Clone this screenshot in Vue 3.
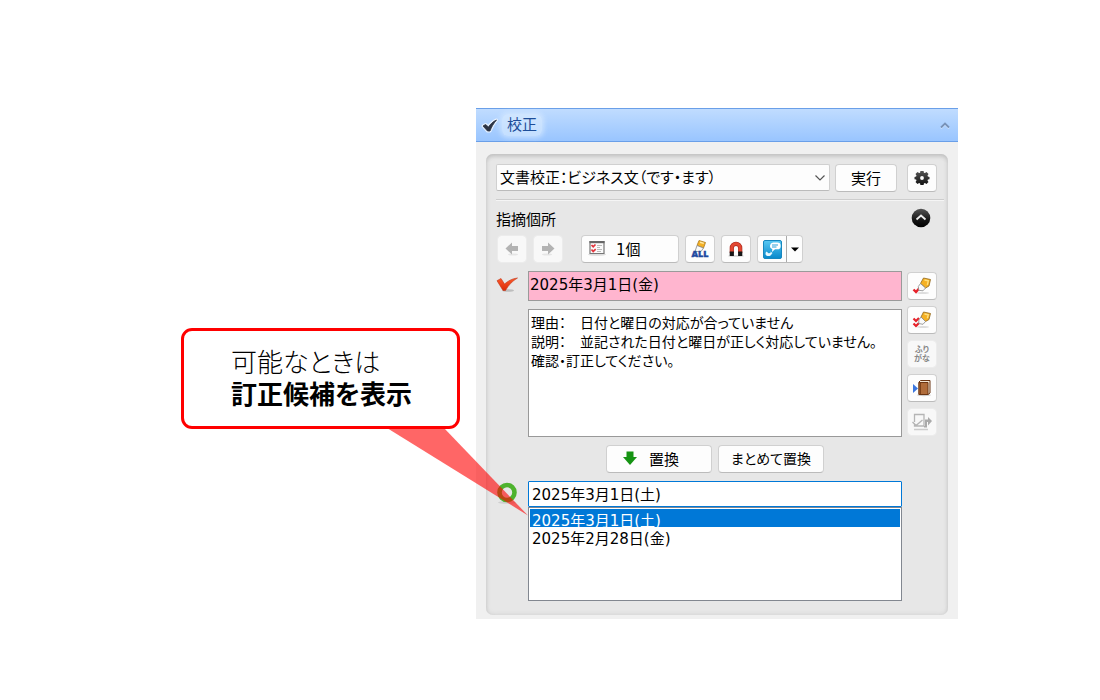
<script setup>
import { ref } from 'vue'

const rule = ref('business')
const finding = ref('2025年3月1日(金)')
const detail = ref('理由：\u3000日付と曜日の対応が合っていません\n説明：\u3000並記された日付と曜日が正しく対応していません。\n確認・訂正してください。')
const candidates = ['2025年3月1日(土)', '2025年2月28日(金)']
const chosen = ref(candidates[0])
</script>

<template>
  <main class="scene">
    <aside class="callout">
      <p class="light">可能なときは</p>
      <p class="strong">訂正候補を表示</p>
      <svg class="pointer" width="141" height="88" viewBox="0 0 141 88" aria-hidden="true">
        <path d="M0 0H57L141 87.500Z" fill="#ff0000" fill-opacity=".6" />
      </svg>
    </aside>

    <section class="panel">
      <header class="titlebar">
        <svg width="18" height="18" viewBox="0 0 18 18" aria-hidden="true">
          <path d="M2 10 4.500 8.500 7.500 11C9.500 8 12 5.500 15.500 4 12.500 7.500 10.500 11 9 15H6.500Z" fill="#fff" stroke="#e6f1ff" stroke-width="3" stroke-linejoin="round" />
          <path d="M2 10 4.500 8.500 7.500 11C9.500 8 12 5.500 15.500 4 12.500 7.500 10.500 11 9 15H6.500Z" fill="#2c3444" stroke="#2c3444" stroke-width=".8" />
        </svg>
        <h1>校正</h1>
        <button class="fold" aria-label="折りたたむ">
          <svg width="12" height="10" viewBox="0 0 12 10"><path d="m2 8.500 4-4 4 4" fill="none" stroke="#d8e9ff" stroke-width="1.500" /><path d="m2 7.500 4-4 4 4" fill="none" stroke="#7892b8" stroke-width="1.800" /></svg>
        </button>
      </header>

      <div class="group">
        <div class="row settings">
          <div class="combo">
            <select v-model="rule" aria-label="文書校正の種類">
              <option value="business">文書校正：ビジネス文（です・ます）</option>
            </select>
            <svg width="12" height="8" viewBox="0 0 12 8" aria-hidden="true"><path d="m1.500 1.500 4.500 4.500 4.500-4.500" fill="none" stroke="#555" stroke-width="1.200" /></svg>
          </div>
          <button class="btn run">実行</button>
          <button class="btn icon gear" aria-label="設定">
            <svg width="16" height="16" viewBox="0 0 16 16">
              <defs><linearGradient id="gearFill" x1="0" y1="0" x2="0" y2="1"><stop offset="0" stop-color="#555" /><stop offset="1" stop-color="#111" /></linearGradient></defs>
              <path fill="url(#gearFill)" fill-rule="evenodd" d="M6.400 1h3.200l.3 1.700 1 .4 1.600-1 2 2-1 1.500.4 1 1.600.3v2.300l-1.600.3-.4 1 1 1.500-2 2-1.600-1-1 .4-.3 1.700H6.400l-.3-1.700-1-.4-1.600 1-2-2 1-1.500-.4-1-1.600-.3V6.900l1.600-.3.4-1-1-1.500 2-2 1.600 1 1-.4ZM8 6.100a1.900 1.900 0 1 0 0 3.800 1.900 1.900 0 0 0 0-3.800Z" />
            </svg>
          </button>
        </div>

        <div class="row heading">
          <h2>指摘個所</h2>
          <button class="collapse" aria-label="閉じる">
            <svg width="20" height="20" viewBox="0 0 20 20">
              <defs><linearGradient id="discFill" x1="0" y1="0" x2="0" y2="1"><stop offset="0" stop-color="#555" /><stop offset=".6" stop-color="#161616" /><stop offset="1" stop-color="#000" /></linearGradient></defs>
              <circle cx="10" cy="10" r="9.300" fill="url(#discFill)" /><path d="m5.500 11.500 4.500-4 4.500 4" fill="none" stroke="#eee" stroke-width="1.800" />
            </svg>
          </button>
        </div>

        <div class="row tools">
          <button class="btn icon" disabled aria-label="前へ">
            <svg width="16" height="16" viewBox="0 0 16 16"><ellipse cx="9" cy="13.500" rx="5" ry="1" fill="#e5e5e5" /><path d="M1.500 7.500 8 1.500V5h6v5H8v3.500Z" fill="#b3b3b3" /></svg>
          </button>
          <button class="btn icon" disabled aria-label="次へ">
            <svg width="16" height="16" viewBox="0 0 16 16"><ellipse cx="7" cy="13.500" rx="5" ry="1" fill="#e5e5e5" /><path d="M14.500 7.500 8 1.500V5H2v5h6v3.500Z" fill="#b3b3b3" /></svg>
          </button>
          <button class="btn count">
            <svg width="18" height="16" viewBox="0 0 18 16" aria-hidden="true">
              <ellipse cx="9" cy="14.500" rx="9" ry="1.300" fill="#ddd" />
              <path d="M2 1.500h14v12H2Z" fill="#fafafa" stroke="#777" stroke-width="1.200" /><path d="M1.500 1h15v2.200h-15Z" fill="#666" />
              <path d="m3.500 5 1.700 1.700L7.500 4.500M3.500 9.500l1.700 2 2.500-2.300" fill="none" stroke="#e2343c" stroke-width="1.700" />
              <path d="M9 5.500h5M9 7.500h3M9 9.500h5M9 11.500h4" stroke="#bbb" />
            </svg>
            <span>1個</span>
          </button>
          <button class="btn icon" aria-label="すべて消去">
            <svg width="22" height="20" viewBox="0 0 22 20">
              <path d="M10 1.500 16.500 3.500 14.500 9 8 6.500Z" fill="#f5b124" stroke="#a87820" stroke-width=".8" /><path d="m11 3.200 3.800 1.200" stroke="#ffe9a5" stroke-width="1.500" />
              <path d="m8 6.500 6.500 2.500-2.500 3.500H6Z" fill="#fafafa" stroke="#888" stroke-width=".8" />
              <text x="11" y="18" text-anchor="middle" class="all">ALL</text>
            </svg>
          </button>
          <button class="btn icon" aria-label="吸着">
            <svg width="18" height="18" viewBox="0 0 18 18">
              <ellipse cx="9" cy="16" rx="8" ry="1" fill="#ddd" />
              <path d="M4.800 13V8a4.200 4.200 0 0 1 8.400 0v5" fill="none" stroke="#a9291f" stroke-width="4.200" /><path d="M4.800 12.500V8a4.200 4.200 0 0 1 8.400 0v4.500" fill="none" stroke="#e34832" stroke-width="3" />
              <path d="M2.700 11.500h4.200V16H2.700ZM11.100 11.500h4.200V16h-4.200Z" fill="#171717" />
            </svg>
          </button>
          <div class="split">
            <button class="main" aria-label="コメント">
              <svg width="19" height="19" viewBox="0 0 19 19">
                <defs><linearGradient id="noteFill" x1="0" y1="0" x2="0" y2="1"><stop offset="0" stop-color="#58c8f3" /><stop offset="1" stop-color="#0788cb" /></linearGradient></defs>
                <rect x=".5" y=".5" width="18" height="18" rx="1.500" fill="url(#noteFill)" stroke="#1687bf" />
                <path d="M10 2.500h4.300a3.400 3.400 0 0 1 0 6.800H12L9 12l.3-2.900A3.400 3.400 0 0 1 10 2.500Z" fill="#fff" /><path d="M9 5h6M9 7h4.500" stroke="#2ba0d9" />
                <path d="M3.500 11.500c-1.500 1.500-1.200 3.500.2 4.200 1.500.8 4 .5 4.800-1.400l1-1.300-2-1.500v1.500l-2 .3Z" fill="#e7f8ff" />
              </svg>
            </button>
            <button class="more" aria-label="その他"><svg width="8" height="5" viewBox="0 0 8 5"><path d="M0 .5h8L4 4.500Z" /></svg></button>
          </div>
        </div>

        <div class="body">
          <svg class="mark" width="22" height="18" viewBox="0 0 22 18" aria-label="誤り">
            <defs><linearGradient id="redFill" x1="0" y1="0" x2="0" y2="1"><stop offset="0" stop-color="#ff5a2b" /><stop offset="1" stop-color="#d92a08" /></linearGradient></defs>
            <ellipse cx="12" cy="15.500" rx="6" ry="1.300" fill="#bdbdbd" />
            <path d="M1 5.700 5 3.500 8.500 9C12 6 16 3.500 21.500 3 16.500 6 12.500 10 9.500 15.500H7Z" fill="url(#redFill)" stroke="#c03518" stroke-width=".6" />
          </svg>
          <div class="texts">
            <input v-model="finding" class="finding" type="text" aria-label="指摘個所" readonly>
            <textarea v-model="detail" aria-label="指摘内容" readonly></textarea>
          </div>
          <div class="side">
            <button class="btn icon" aria-label="消去">
              <svg width="20" height="18" viewBox="0 0 20 18">
                <ellipse cx="11" cy="16" rx="6" ry="1" fill="#ddd" /><path d="M1.500 12.500 4 15l3.500-4" fill="none" stroke="#e6222b" stroke-width="2.400" />
                <path d="M11.500 1 18.500 2.500 17 9 13.500 11 8.500 6.500Z" fill="#f5b124" stroke="#8f661d" stroke-width=".8" /><path d="m12.500 3 3.800.8-1 4" fill="none" stroke="#ffdf7e" stroke-width="1.300" />
                <path d="m8.500 6.500 5 4.500-2.500 2.800-4.200-.5-.5-3.800Z" fill="#fafafa" stroke="#888" stroke-width=".8" />
              </svg>
            </button>
            <button class="btn icon" aria-label="同じ指摘を消去">
              <svg width="20" height="18" viewBox="0 0 20 18">
                <ellipse cx="11" cy="16" rx="6" ry="1" fill="#ddd" /><path d="m1.500 7.500 2.500 2.500L7 7M1.500 12.500 4 15l3-3" fill="none" stroke="#e6222b" stroke-width="2.200" />
                <path d="M11.500 1 18.500 2.500 17 8.500 13.500 10.500 9 6Z" fill="#f5b124" stroke="#8f661d" stroke-width=".8" /><path d="m12.500 3 3.800.8-1 3.500" fill="none" stroke="#ffdf7e" stroke-width="1.300" />
                <path d="m9 6 4.500 4.500-2.500 2.800-4.200-.8V9Z" fill="#fafafa" stroke="#888" stroke-width=".8" />
              </svg>
            </button>
            <button class="btn icon ruby" disabled><span>ふり</span><span>がな</span></button>
            <button class="btn icon" aria-label="辞書">
              <svg width="20" height="18" viewBox="0 0 20 18">
                <ellipse cx="12" cy="16" rx="7" ry="1.200" fill="#ccc" /><path d="m1 5 5 4.500L1 14Z" fill="#3c77df" />
                <path d="M7 3 8.500 1.500H18v12.500L16 15.500H7Z" fill="#f4e6d3" stroke="#6b3512" /><path d="M7 3.500h9v12H7Z" fill="#b06c3a" stroke="#6b3512" /><path d="M8.500 4v11" stroke="#7d4118" />
              </svg>
            </button>
            <button class="btn icon" disabled aria-label="送る">
              <svg width="20" height="18" viewBox="0 0 20 18">
                <path d="M2 16.500h14" stroke="#ccc" stroke-width="1.500" /><path d="M2.500 9V1.500h9.500V13H2.500v-2M.5 9l3.500 3.500L10.500 7" fill="none" stroke="#b5b5b5" stroke-width="1.300" />
                <path d="M12 14.500h3V9h1v3.500l4-4.500-4-4v2.500h-3V13H12Z" fill="#aaa" />
              </svg>
            </button>
          </div>

          <div class="actions">
            <button class="btn wide replace">
              <svg width="14" height="15" viewBox="0 0 14 15" aria-hidden="true"><path d="M3.500.5h7V6H14l-7 8L0 6h3.500Z" fill="#159313" /></svg>
              <span>置換</span>
            </button>
            <button class="btn wide batch">まとめて置換</button>
          </div>

          <svg class="mark ok" width="22" height="22" viewBox="0 0 22 22" aria-label="訂正候補">
            <ellipse cx="11" cy="20.500" rx="9" ry="1.300" fill="#cfcfcf" /><circle cx="11" cy="10.500" r="7.500" fill="none" stroke="#4eb32e" stroke-width="4.600" />
          </svg>
          <div class="candidates">
            <input v-model="chosen" type="text" aria-label="訂正候補">
            <select v-model="chosen" size="5" aria-label="訂正候補の一覧">
              <option v-for="item in candidates" :key="item" :value="item">{{ item }}</option>
            </select>
          </div>
        </div>
      </div>
    </section>
  </main>
</template>

<style>
body { margin: 0; background: #fff; }
</style>

<style scoped>
* { box-sizing: border-box; }
.scene {
  display: grid;
  grid-template-columns: 279px minmax(400px, 1fr);
  gap: 16px;
  align-items: start;
  padding: 108px 142px 80px 181px;
  color: #000;
  font-family: "DejaVu Sans", "Noto Sans CJK JP", sans-serif;
  font-size: 15px;
  font-feature-settings: "palt";
}
button, input, textarea, select {
  margin: 0;
  color: inherit;
  font: inherit;
  font-feature-settings: inherit;
  outline: none;
}
svg { display: block; flex: none; overflow: visible; }
.callout {
  position: relative;
  z-index: 1;
  margin-top: 220px;
  padding: 14px 20px 17px 47px;
  border: 3px solid #f00;
  border-radius: 11px;
  background: #fff;
  font-family: "Noto Sans CJK JP", sans-serif;
  font-size: 26px;
  line-height: 32px;
  white-space: nowrap;
}
.callout p { margin: 0; }
.light { font-weight: 300; }
.strong { font-weight: 700; }
.pointer { position: absolute; top: 97px; left: 203px; }

.panel { background: #f0f0f0; padding-bottom: 4px; }
.titlebar {
  display: flex;
  align-items: center;
  height: 34px;
  padding: 0 7px 0 5px;
  border: solid #6a9fe8;
  border-width: 1px 0;
  background: linear-gradient(#c0dcff, #99c5ff);
}
.titlebar h1 {
  margin: 0 auto 0 3px;
  padding: 0 5px;
  border-radius: 6px;
  background: rgba(222, 238, 255, .6);
  box-shadow: 0 0 5px 2px rgba(222, 238, 255, .6);
  color: #1e4e99;
  font-size: 15px;
  font-weight: 400;
  line-height: 22px;
}
.fold, .collapse { padding: 0; border: 0; background: none; }
.group {
  margin: 12px 10px 0;
  padding: 10px 11px 14px 10px;
  border-radius: 7px;
  background: #e7e7e7;
  box-shadow: inset 0 3px 4px -1px #c0c0c0, inset 0 0 5px #cdcdcd;
}
.row { display: flex; align-items: center; }
.btn {
  display: flex;
  align-items: center;
  justify-content: center;
  height: 28px;
  padding: 0 0 2px;
  border: 1px solid #d0d0d0;
  border-bottom-color: #bbb;
  border-radius: 4px;
  background: #fdfdfd;
  white-space: nowrap;
}
.btn.icon { width: 30px; padding: 0; }
.btn:disabled { border-color: #ececec; background: #f8f8f8; background-clip: padding-box; }
.settings { padding-bottom: 7px; }
.combo { position: relative; flex: 1; min-width: 0; }
.combo select {
  display: block;
  width: 100%;
  height: 27px;
  margin-bottom: 1px;
  padding: 0 24px 0 3px;
  border: 1px solid #d0d0d0;
  border-bottom-color: #bbb;
  border-radius: 2px;
  background: #fdfdfd;
  appearance: none;
}
.combo svg { position: absolute; top: 10px; right: 4px; }
.run { width: 62px; margin-left: 5px; }
.gear { margin-left: 10px; }
.heading {
  justify-content: space-between;
  height: 36px;
  margin-right: -7px;
  padding: 1px 13px 0 0;
  border-top: 1px solid #cdcdcd;
  box-shadow: inset 0 1px #f5f5f5;
}
.heading h2 { margin: 4px 0 0; font-size: 15px; font-weight: 400; line-height: 20px; }
.tools { gap: 6px; padding-left: 1px; }
.count { justify-content: flex-start; gap: 10px; width: 98px; margin-left: 12px; padding-left: 6px; }
.all { fill: #1f4aa0; stroke: #1f4aa0; stroke-width: .4px; font-family: "Noto Sans", sans-serif; font-size: 9px; font-weight: 900; }
.split {
  display: flex;
  height: 28px;
  border: 1px solid #d0d0d0;
  border-bottom-color: #bbb;
  border-radius: 4px;
  background: #fdfdfd;
}
.split button { display: flex; align-items: center; justify-content: center; padding: 0; border: 0; background: none; }
.split .main { width: 28px; }
.split .more { width: 16px; border-left: 1px solid #aaa; }

.body {
  display: grid;
  grid-template-columns: 32px minmax(0, 1fr) 30px;
  margin-top: 8px;
}
.mark { margin-top: 4px; }
.texts { display: flex; flex-direction: column; gap: 8px; margin-right: 5px; }
.finding {
  height: 30px;
  padding: 0 2px 6px 1px;
  border: 1px solid #9a9a9a;
  background: #ffb5cf;
}
textarea {
  display: block;
  height: 128px;
  padding: 4px 2px;
  border: 1px solid #999;
  background: #fff;
  font-size: 14px;
  line-height: 19px;
  resize: none;
}
.side { display: flex; flex-direction: column; gap: 6px; padding-top: 1px; }
.side .ruby { flex-direction: column; color: #888; font-size: 8px; font-weight: 700; line-height: 9px; }
.actions { grid-column: 2; display: flex; justify-content: center; gap: 6px; margin: 8px 5px 8px 0; }
.wide { width: 106px; }
.replace { justify-content: flex-start; gap: 12px; padding-left: 16px; }
.batch { font-size: 14px; }
.mark.ok { grid-column: 1; margin-top: 1px; }
.candidates { grid-column: 2; margin-right: 5px; }
.candidates input {
  display: block;
  width: 100%;
  height: 26px;
  padding: 0 3px 2px;
  border: 1px solid #0078d7;
  border-radius: 1px;
  background: #fff;
}
.candidates select {
  display: block;
  width: 100%;
  height: 94px;
  padding: 1px;
  border: 1px solid #828790;
  border-radius: 0;
  background: #fff;
  overflow: hidden;
}
.candidates option { min-height: 18px; height: 18px; padding: 0 2px; line-height: 16px; }
.candidates option:checked { background: linear-gradient(#0078d7, #0078d7); color: #fff; }
</style>
